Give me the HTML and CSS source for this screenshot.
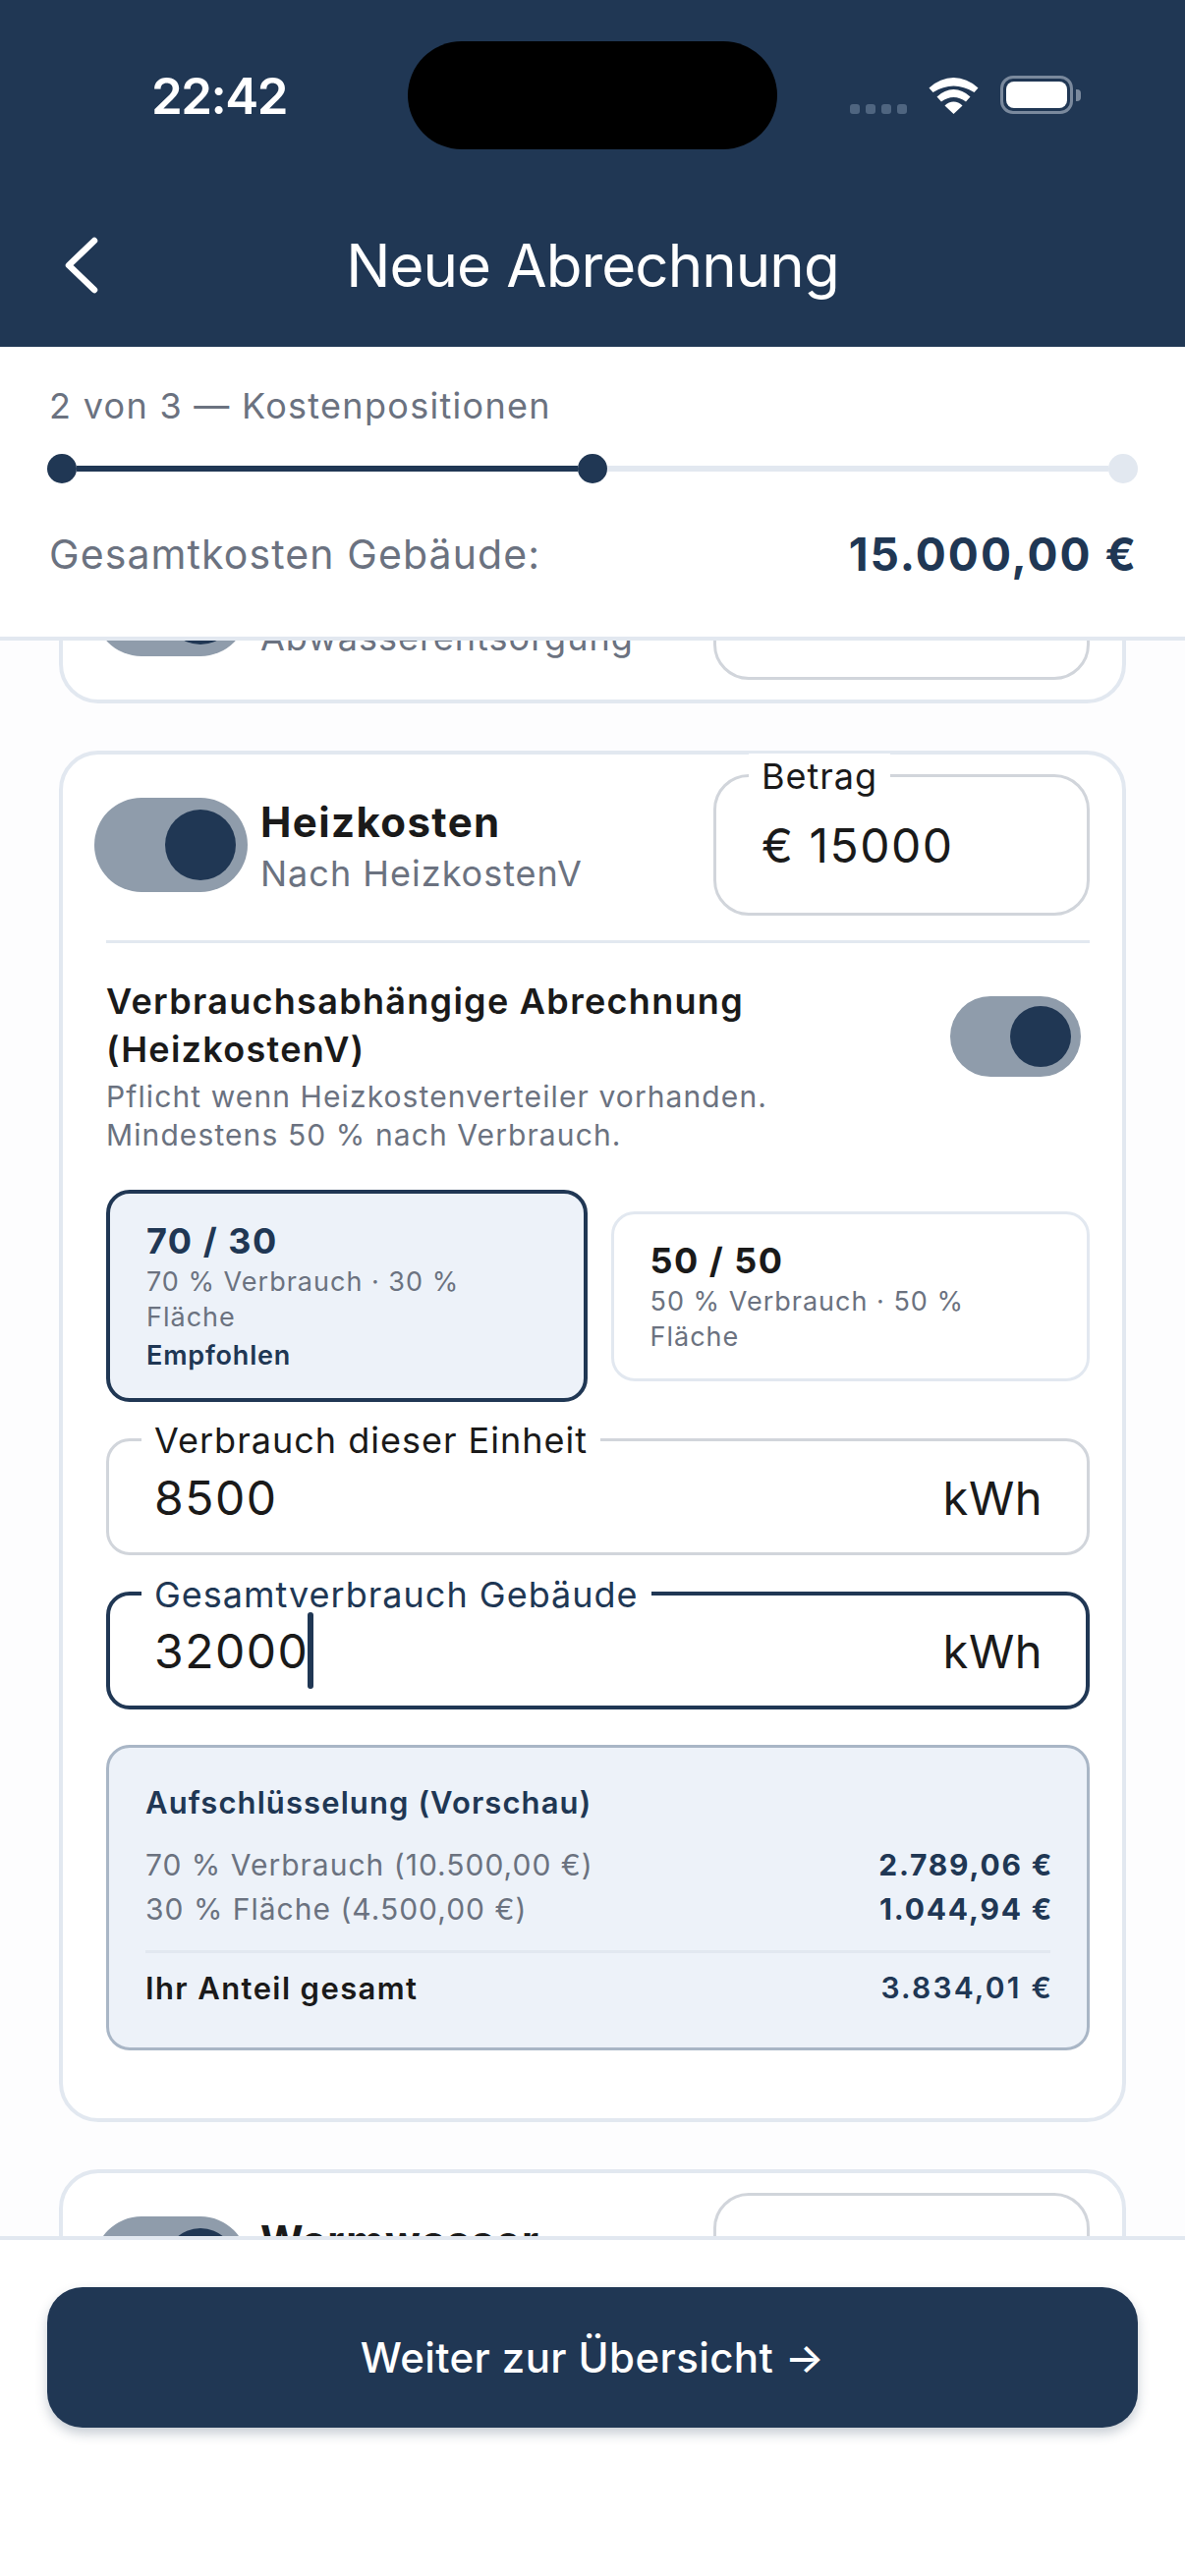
FILE: index.html
```html
<!DOCTYPE html>
<html lang="de">
<head>
<meta charset="utf-8">
<title>Neue Abrechnung</title>
<link rel="stylesheet" href="styles.css">
</head>
<body>
<div class="page">
  <header class="header">
    <div class="status">
      <div class="time-wrap"><span class="time">22:42</span></div>
      <div class="island"></div>
      <div class="status-icons">
        <div class="signal"><i></i><i></i><i></i><i></i></div>
        <svg class="wifi" width="51" height="37" viewBox="0 0 51 37"><path fill="#fff" d="M.5 10.5Q12 0 25.5 0T50.500 10.500L46.500 15Q36 8.500 25.500 8.500T4.500 15Z"/><path fill="#fff" d="M8.500 19.500Q16.500 12 25.500 12T42.500 19.500L38 24.500Q32 20 25.500 20T13 24.500Z"/><path fill="#fff" d="M16.500 28.500Q20.500 24.500 25.500 24.500T34.500 28.500L25.500 37Z"/></svg>
        <div class="battery"><div class="battery-body"><div class="battery-fill"></div></div><div class="battery-nub"></div></div>
      </div>
    </div>
    <div class="nav">
      <svg class="back" width="36" height="60" viewBox="0 0 36 60"><path d="M32 5 6 30l26 25" fill="none" stroke="#fff" stroke-width="6.500" stroke-linecap="round" stroke-linejoin="round"/></svg>
      <h1 class="title">Neue Abrechnung</h1>
      <span></span>
    </div>
  </header>

  <section class="progress">
    <div class="step-label">2 von 3 — Kostenpositionen</div>
    <div class="stepper">
      <span class="dot on"></span><span class="bar on"></span><span class="dot on"></span><span class="bar"></span><span class="dot"></span>
    </div>
    <div class="total"><span class="total-label">Gesamtkosten Gebäude:</span><span class="total-value">15.000,00 €</span></div>
  </section>

  <main class="scroll">
    <div class="scroll-inner">
      <article class="card">
        <div class="card-head">
          <div class="toggle"><span class="thumb"></span></div>
          <div class="head-text"><div class="head-title">Abwasser</div><div class="head-sub">Abwasserentsorgung</div></div>
          <div class="field amount"></div>
        </div>
      </article>

      <article class="card">
        <div class="card-head">
          <div class="toggle"><span class="thumb"></span></div>
          <div class="head-text"><div class="head-title">Heizkosten</div><div class="head-sub">Nach HeizkostenV</div></div>
          <div class="field amount">
            <span class="field-label">Betrag</span>
            <span class="field-value">€ 15000</span>
          </div>
        </div>
        <div class="detail">
          <div class="consumption">
            <div class="consumption-text">
              <div class="consumption-title">Verbrauchsabhängige Abrechnung (HeizkostenV)</div>
              <div class="consumption-note">Pflicht wenn Heizkostenverteiler vorhanden.<br>Mindestens 50 % nach Verbrauch.</div>
            </div>
            <div class="toggle small"><span class="thumb"></span></div>
          </div>
          <div class="options">
            <div class="option active">
              <div class="option-title">70 / 30</div>
              <div class="option-sub">70 % Verbrauch · 30 % Fläche</div>
              <div class="option-tag">Empfohlen</div>
            </div>
            <div class="option">
              <div class="option-title">50 / 50</div>
              <div class="option-sub">50 % Verbrauch · 50 % Fläche</div>
            </div>
          </div>
          <div class="field wide">
            <span class="field-label">Verbrauch dieser Einheit</span>
            <span class="field-value">8500</span><span class="field-unit">kWh</span>
          </div>
          <div class="field wide focus">
            <span class="field-label">Gesamtverbrauch Gebäude</span>
            <span class="field-value">32000<span class="caret"></span></span><span class="field-unit">kWh</span>
          </div>
          <div class="breakdown">
            <div class="breakdown-title">Aufschlüsselung (Vorschau)</div>
            <div class="row first"><span class="row-label">70 % Verbrauch (10.500,00 €)</span><span class="row-value">2.789,06 €</span></div>
            <div class="row"><span class="row-label">30 % Fläche (4.500,00 €)</span><span class="row-value">1.044,94 €</span></div>
            <div class="row sum"><span class="sum-label">Ihr Anteil gesamt</span><span class="sum-value">3.834,01 €</span></div>
          </div>
        </div>
      </article>

      <article class="card">
        <div class="card-head">
          <div class="toggle"><span class="thumb"></span></div>
          <div class="head-text"><div class="head-title">Warmwasser</div><div class="head-sub">Nach HeizkostenV</div></div>
          <div class="field amount"></div>
        </div>
      </article>
    </div>
  </main>

  <footer class="footer">
    <button class="cta" type="button">Weiter zur Übersicht →</button>
  </footer>
</div>
</body>
</html>
```

FILE: styles.css
```css
* { box-sizing: border-box; }
html, body { margin: 0; padding: 0; }
body { background: #fff; font-family: Inter, "Noto Sans", sans-serif; color: #1a1a1a; }
.page { width: 1206px; height: 2622px; display: flex; flex-direction: column; overflow: hidden; }

.header { height: 353px; background: #203754; padding-top: 42px; flex: none; }
.status { display: flex; height: 110px; }
.time-wrap { width: 415px; padding-left: 154px; display: flex; align-items: center; }
.time { color: #fff; font-size: 51px; font-weight: 600; line-height: 60px; letter-spacing: -1.500px; margin-top: 1px; }
.island { width: 376px; height: 110px; background: #000; border-radius: 55px; }
.status-icons { flex: 1; display: flex; align-items: flex-end; padding: 0 0 36px 74px; }
.signal { display: flex; gap: 6px; width: 58px; margin-right: 22px; }
.signal i { width: 10px; height: 10px; border-radius: 3px; background: #4f6580; display: block; }
.wifi { display: block; margin-right: 22px; }
.battery { display: flex; align-items: center; }
.battery-body { width: 74px; height: 39px; border: 3px solid #7a899d; border-radius: 13px; padding: 3px; }
.battery-fill { width: 100%; height: 100%; background: #fff; border-radius: 8px; }
.battery-nub { width: 5px; height: 12px; background: #7a899d; border-radius: 0 4px 4px 0; margin-left: 3px; }

.nav { display: grid; grid-template-columns: 1fr auto 1fr; align-items: center; padding: 0 0 0 64px; height: 70px; margin-top: 83px; }
.back { display: block; }
.title { margin: 0 0 0 -64px; color: #fff; font-size: 60px; font-weight: 400; line-height: 70px; letter-spacing: -.9px; text-align: center; }

.progress { flex: none; height: 299px; border-bottom: 4px solid #e2e8f0; padding: 36px 48px 0; background: #fff; position: relative; z-index: 2; }
.step-label { font-size: 36px; line-height: 48px; letter-spacing: 1.3px; color: #6b7280; padding-left: 2px; }
.stepper { display: flex; align-items: center; margin-top: 25px; }
.dot { width: 30px; height: 30px; border-radius: 50%; background: #e2e8f0; flex: none; }
.dot.on { background: #203754; }
.bar { height: 6px; flex: 1; background: #e2e8f0; }
.bar.on { background: #203754; }
.total { display: flex; justify-content: space-between; align-items: center; margin-top: 45px; padding-left: 2px; }
.total-label { font-size: 41px; line-height: 54px; letter-spacing: 1.1px; color: #6b7280; }
.total-value { font-size: 46px; line-height: 54px; font-weight: 700; letter-spacing: 2px; color: #203754; }

.scroll { flex: 1; overflow: hidden; min-height: 0; background: #fdfdfe; }
.scroll-inner { margin-top: -128px; display: flex; flex-direction: column; gap: 48px; }
.card { margin: 0 60px; border: 4px solid #e2e8f0; border-radius: 40px; background: #fff; padding-top: 20px; flex: none; }
.card-head { display: flex; align-items: center; padding: 0 33px 0 32px; margin-bottom: 20px; }
.toggle { width: 156px; height: 96px; border-radius: 48px; background: #8f9cab; padding: 12px; display: flex; justify-content: flex-end; flex: none; }
.thumb { width: 72px; height: 72px; border-radius: 50%; background: #203754; display: block; }
.toggle.small { width: 133px; height: 82px; padding: 10px; border-radius: 41px; }
.toggle.small .thumb { width: 62px; height: 62px; }
.head-text { flex: 1; padding: 3px 0 0 13px; }
.head-title { font-size: 42px; line-height: 50px; font-weight: 700; letter-spacing: 1.4px; color: #1a1a1a; }
.head-sub { font-size: 36px; line-height: 46px; letter-spacing: 1px; color: #6b7280; margin-top: 4px; }

.field { position: relative; border: 3px solid #d1d5db; background: #fff; display: flex; align-items: center; justify-content: space-between; }
.field.amount { width: 383px; height: 144px; padding: 2px 46px 0; flex: none; border-radius: 36px; }
.field.wide { height: 119px; padding: 3px 45px 0 46px; margin-top: 37px; border-radius: 24px; }
.field-label { position: absolute; left: 33px; top: -24px; background: #fff; padding: 0 13px; font-size: 36px; line-height: 46px; letter-spacing: 1px; color: #1a1a1a; }
.field-value { position: relative; font-size: 48px; line-height: 60px; letter-spacing: 1.500px; color: #1a1a1a; }
.field-unit { font-size: 47px; line-height: 60px; letter-spacing: .5px; color: #1a1a1a; }
.field.wide.focus { height: 120px; border: 4px solid #203754; padding: 2px 44px 0 45px; }
.field.focus .field-label { color: #203754; left: 32px; }
.caret { position: absolute; right: -5px; top: -10px; width: 6px; height: 78px; border-radius: 3px; background: #203754; }

.detail { margin: 25px 33px 0 44px; border-top: 3px solid #e2e8f0; padding-top: 35px; padding-bottom: 69px; }
.consumption { display: flex; justify-content: space-between; align-items: flex-start; }
.consumption-text { width: 760px; }
.consumption-title { font-size: 36px; line-height: 49px; font-weight: 600; letter-spacing: 1.3px; color: #1a1a1a; }
.consumption-note { font-size: 30px; line-height: 39px; letter-spacing: 1.1px; color: #6b7280; margin-top: 4px; }
.consumption .toggle { margin-top: 19px; margin-right: 9px; }

.options { display: flex; align-items: center; gap: 24px; margin-top: 36px; margin-bottom: 36px; }
.option { flex: 1; border: 3px solid #e2e8f0; border-radius: 24px; padding: 25px 37px 24px; background: #fff; }
.option.active { border: 4px solid #203754; background: #edf2f9; padding: 26px 37px 25px; }
.option-title { font-size: 36px; line-height: 44px; font-weight: 700; letter-spacing: 1.5px; color: #1a1a1a; }
.option.active .option-title { color: #203754; }
.option-sub { font-size: 27px; line-height: 36px; letter-spacing: 1px; color: #6b7280; margin-top: 2px; }
.option-tag { font-size: 27px; line-height: 36px; font-weight: 600; letter-spacing: .8px; color: #203754; margin-top: 3px; }

.breakdown { margin-top: 36px; border: 3px solid #a9b6c6; border-radius: 24px; background: #edf2f9; padding: 35px 37px 36px; }
.breakdown-title { font-size: 31px; line-height: 42px; font-weight: 600; letter-spacing: 1.1px; color: #203754; }
.row { display: flex; justify-content: space-between; align-items: center; height: 45px; }
.row.first { margin-top: 19px; }
.row.sum { height: 63px; margin-top: 20px; padding-top: 10px; border-top: 3px solid #e2e8f0; }
.row-label { font-size: 30px; letter-spacing: 1px; color: #6b7280; }
.row-value { font-size: 30px; font-weight: 700; letter-spacing: 1.8px; color: #203754; margin-right: -3px; }
.sum-label { font-size: 31px; font-weight: 600; letter-spacing: 1.4px; color: #1a1a1a; }
.sum-value { font-size: 30px; font-weight: 600; letter-spacing: 2.2px; color: #203754; margin-right: -3px; }

.footer { flex: none; height: 346px; border-top: 4px solid #e2e8f0; background: #fff; padding: 48px 48px 0; position: relative; z-index: 2; }
.cta { display: block; width: 100%; height: 143px; border: 0; border-radius: 36px; background: #203754; color: #fff; font-family: Inter, "Noto Sans", sans-serif; font-size: 42px; font-weight: 500; letter-spacing: .4px; box-shadow: 0 6px 12px rgba(32,55,84,.25); }
```
